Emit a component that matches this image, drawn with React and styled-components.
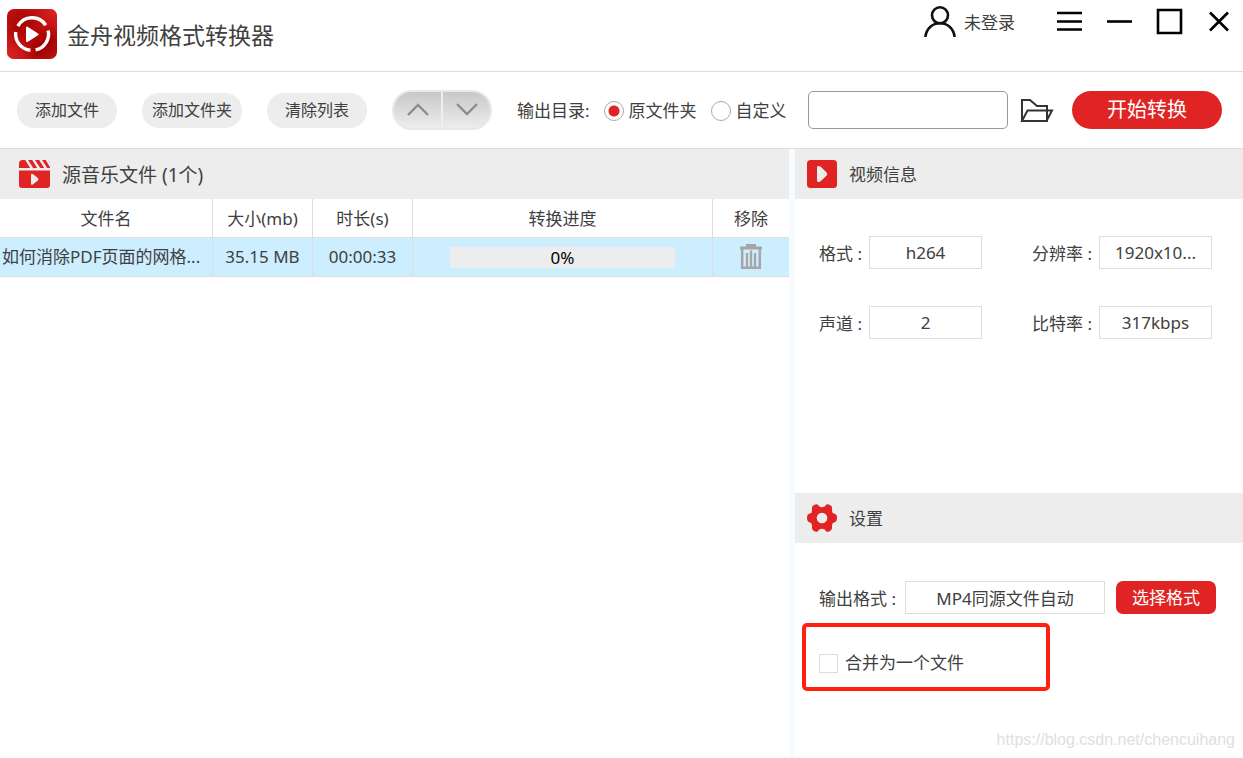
import React, { useState } from 'react';
import styled, { createGlobalStyle } from 'styled-components';

const files = [
    { id: 1, name: '如何消除PDF页面的网格...', size: '35.15 MB', duration: '00:00:33', progress: 0 },
];

const videoInfo = [
    { id: 'format', label: '格式 :', value: 'h264' },
    { id: 'resolution', label: '分辨率 :', value: '1920x10...' },
    { id: 'channels', label: '声道 :', value: '2' },
    { id: 'bitrate', label: '比特率 :', value: '317kbps' },
];

const LogoIcon = () => (
    <svg width="50" height="50" viewBox="0 0 50 50" aria-hidden="true">
        <defs>
            <linearGradient id="logoFill" x1="0" y1="0" x2="1" y2="1">
                <stop offset="0" stopColor="#c01414" />
                <stop offset="0.3" stopColor="#a80404" />
                <stop offset="0.5" stopColor="#b80c0c" />
                <stop offset="0.75" stopColor="#9c0000" />
                <stop offset="1" stopColor="#c41414" />
            </linearGradient>
            <linearGradient id="logoLight" x1="0" y1="1" x2="1" y2="0">
                <stop offset="0" stopColor="#e02626" />
                <stop offset="0.4" stopColor="#e02626" stopOpacity="0" />
                <stop offset="0.6" stopColor="#e02626" stopOpacity="0" />
                <stop offset="1" stopColor="#e02626" />
            </linearGradient>
        </defs>
        <rect width="50" height="50" rx="7" fill="url(#logoFill)" />
        <rect width="50" height="50" rx="7" fill="url(#logoLight)" />
        <g fill="none" stroke="#fff" strokeWidth="3.4">
            <path d="M10.8 17.200A16.300 16.300 0 0 1 38.700 16.200" />
            <path d="M8.700 23A16.300 16.300 0 0 0 23.400 41.200" />
            <path d="M41.200 21.500A16.300 16.300 0 0 1 28.600 40.900" />
        </g>
        <path d="M20 18.500v13.600l10.500-6.800z" fill="#fff" stroke="#fff" strokeWidth="2" strokeLinejoin="round" />
    </svg>
);

const UserIcon = () => (
    <svg width="32" height="32" viewBox="0 0 32 32" fill="none" stroke="#111" strokeWidth="2.6" aria-hidden="true">
        <circle cx="16" cy="9.3" r="8" />
        <path d="M1.4 31C2.2 22.5 8.5 17.3 16 17.3S29.8 22.5 30.6 31" />
    </svg>
);

const FolderIcon = () => (
    <svg width="34" height="25" viewBox="0 0 34 25" fill="none" stroke="#333" strokeWidth="2" aria-hidden="true">
        <path d="M2 23V2h8l7 6h10v15z" />
        <path d="M2 23l5.5-10.5H32L26.5 23z" />
    </svg>
);

const ClapperIcon = () => (
    <svg width="31" height="28" viewBox="0 0 31 28" aria-hidden="true">
        <path d="M3.5 0H27.5Q31 0 31 3.5V8H0V3.5Q0 0 3.5 0z" fill="#e02424" />
        <path d="M7 -1l6 9.5M14 -1l6 9.500M21 -1l6 9.500M27.500 -1l5 8.500" stroke="#ededed" strokeWidth="2.4" />
        <path d="M0 10.500H31V25q0 3-3 3H3q-3 0-3-3z" fill="#e02424" />
        <path d="M12 15v8.500q0 2 1.800 1l5-4q1.400-1.200 0-2.500l-5-4Q12 13 12 15z" fill="#ededed" />
    </svg>
);

const PlayIcon = () => (
    <svg width="30" height="28" viewBox="0 0 30 28" aria-hidden="true">
        <rect width="30" height="28" rx="3.5" fill="#e02424" />
        <path d="M10 7.5v13q0 2 2 1.4 1.8-.5 3-1.9l4.600-4.600q1.400-1.400 0-2.800L15 8q-1.200-1.400-3-1.900-2-.6-2 1.400z" fill="#ededed" />
    </svg>
);

const GearIcon = () => (
    <svg width="30" height="28" viewBox="0 0 30 28" aria-hidden="true">
        <path
            d="M7.500 .8Q9.500 -.3 11 .8L12.300 2.400Q15 4 17.700 2.400L19 .8Q20.500 -.3 22.500 .8L24 1.800Q25.400 3 25 5V6.500Q25 9 27 9.600L28.800 10.200Q30 11 30 14T28.800 17.800L27 18.400Q25 19 25 21.500V23Q25.400 25 24 26.200L22.500 27.200Q20.500 28.300 19 27.200L17.700 25.600Q15 24 12.300 25.600L11 27.200Q9.500 28.300 7.500 27.200L6 26.200Q4.600 25 5 23V21.500Q5 19 3 18.400L1.200 17.800Q0 17 0 14T1.200 10.200L3 9.600Q5 9 5 6.500V5Q4.600 3 6 1.800z"
            fill="#e02424"
        />
        <circle cx="15" cy="14" r="5.300" fill="#ededed" />
    </svg>
);

const TrashIcon = () => (
    <svg width="24" height="26" viewBox="0 0 24 26" fill="none" stroke="#a6a6a6" aria-hidden="true">
        <path d="M1 4h22M7 1.500h10" strokeWidth="3" />
        <path d="M3.200 4v19.800h17.600V4" strokeWidth="2.500" />
        <path d="M8 9v15M12 6.500v17.500M16 9v15" strokeWidth="2.300" />
    </svg>
);

const App = () => {
    const [target, setTarget] = useState('source');
    const [path, setPath] = useState('');
    const [merge, setMerge] = useState(false);

    return (
        <Window>
            <GlobalStyle />

            {/* TITLE BAR */}
            <TitleBar>
                <Brand>
                    <LogoIcon />
                    <h1>金舟视频格式转换器</h1>
                </Brand>
                <WindowActions>
                    <UserButton type="button">
                        <UserIcon />
                        <span>未登录</span>
                    </UserButton>
                    <WindowButton type="button" aria-label="菜单">
                        <svg width="28" height="28" viewBox="0 0 28 28"><path d="M2 5h25M2 13.500h25M2 21.500h25" /></svg>
                    </WindowButton>
                    <WindowButton type="button" aria-label="最小化">
                        <svg width="28" height="28" viewBox="0 0 28 28"><path d="M2 13.500h25" /></svg>
                    </WindowButton>
                    <WindowButton type="button" aria-label="最大化">
                        <svg width="28" height="28" viewBox="0 0 28 28"><path d="M3 2h23v23H3z" /></svg>
                    </WindowButton>
                    <WindowButton type="button" aria-label="关闭">
                        <svg width="28" height="28" viewBox="0 0 28 28"><path d="M5 4.500l18 18M23 4.500l-18 18" /></svg>
                    </WindowButton>
                </WindowActions>
            </TitleBar>

            {/* TOOLBAR */}
            <Toolbar>
                <ButtonRow>
                    <ToolButton type="button">添加文件</ToolButton>
                    <ToolButton type="button">添加文件夹</ToolButton>
                    <ToolButton type="button">清除列表</ToolButton>
                    <MoveGroup>
                        <button type="button" aria-label="上移">
                            <svg width="22" height="14" viewBox="0 0 22 14"><path d="M1 12L11 2l10 10" /></svg>
                        </button>
                        <button type="button" aria-label="下移">
                            <svg width="22" height="14" viewBox="0 0 22 14"><path d="M1 1l10 10L21 1" /></svg>
                        </button>
                    </MoveGroup>
                </ButtonRow>
                <TargetGroup role="radiogroup" aria-labelledby="target-label">
                    <span id="target-label">输出目录:</span>
                    <RadioLabel>
                        <Radio name="target" checked={target === 'source'} onChange={() => setTarget('source')} />
                        原文件夹
                    </RadioLabel>
                    <RadioLabel>
                        <Radio name="target" checked={target === 'custom'} onChange={() => setTarget('custom')} />
                        自定义
                    </RadioLabel>
                </TargetGroup>
                <PathInput aria-label="输出目录" value={path} onChange={(e) => setPath(e.target.value)} />
                <IconButton type="button" aria-label="打开文件夹">
                    <FolderIcon />
                </IconButton>
                <StartButton type="button">开始转换</StartButton>
            </Toolbar>

            <Content>
                {/* FILE LIST */}
                <FilePane>
                    <PaneHeader $wide>
                        <ClapperIcon />
                        <h2>源音乐文件 (1个)</h2>
                    </PaneHeader>
                    <FileTable>
                        <colgroup>
                            <col />
                            <col className="short" />
                            <col className="short" />
                            <col className="progress" />
                            <col className="remove" />
                        </colgroup>
                        <thead>
                            <tr>
                                <th>文件名</th>
                                <th>大小(mb)</th>
                                <th>时长(s)</th>
                                <th>转换进度</th>
                                <th>移除</th>
                            </tr>
                        </thead>
                        <tbody>
                            {files.map((file) => (
                                <tr key={file.id}>
                                    <td className="name">{file.name}</td>
                                    <td>{file.size}</td>
                                    <td>{file.duration}</td>
                                    <td>
                                        <Progress>{file.progress}%</Progress>
                                    </td>
                                    <td>
                                        <IconButton type="button" aria-label="移除">
                                            <TrashIcon />
                                        </IconButton>
                                    </td>
                                </tr>
                            ))}
                        </tbody>
                    </FileTable>
                </FilePane>

                <SidePane>
                    {/* VIDEO INFO */}
                    <InfoSection>
                        <PaneHeader>
                            <PlayIcon />
                            <h2>视频信息</h2>
                        </PaneHeader>
                        <InfoGrid>
                            {videoInfo.map((item) => (
                                <React.Fragment key={item.id}>
                                    <label htmlFor={item.id}>{item.label}</label>
                                    <ValueBox id={item.id} value={item.value} readOnly />
                                </React.Fragment>
                            ))}
                        </InfoGrid>
                    </InfoSection>

                    {/* SETTINGS */}
                    <section>
                        <PaneHeader>
                            <GearIcon />
                            <h2>设置</h2>
                        </PaneHeader>
                        <FormatRow>
                            <label htmlFor="output">输出格式 :</label>
                            <ValueBox id="output" value="MP4同源文件自动" readOnly $wide />
                            <FormatButton type="button">选择格式</FormatButton>
                        </FormatRow>
                        <MergeBox>
                            <label>
                                <Checkbox checked={merge} onChange={(e) => setMerge(e.target.checked)} />
                                合并为一个文件
                            </label>
                        </MergeBox>
                    </section>
                </SidePane>
            </Content>

            <Watermark>https://blog.csdn.net/chencuihang</Watermark>
        </Window>
    );
};

const GlobalStyle = createGlobalStyle`
    * {
        box-sizing: border-box;
    }

    body {
        margin: 0;
        background: #fff;
    }

    body, button, input {
        font-family: "Noto Sans", "Noto Sans CJK SC", sans-serif;
        font-size: 17px;
        line-height: 24px;
        color: #404040;
    }

    h1, h2 {
        margin: 0;
        font-weight: 400;
    }

    button {
        padding: 0;
        border: 0;
        background: none;
        cursor: pointer;
    }

    svg {
        display: block;
        flex-shrink: 0;
    }
`;

const Window = styled.div`
    position: relative;
    display: flex;
    flex-direction: column;
    min-height: 100vh;
`;

/* ── TITLE BAR ── */
const TitleBar = styled.header`
    display: flex;
    justify-content: space-between;
    min-height: 72px;
    border-bottom: 1px solid #ddd;
`;

const Brand = styled.div`
    display: flex;
    align-items: center;
    gap: 10px;
    padding: 0 7px 3px;

    h1 {
        padding-top: 2px;
        font-size: 23px;
        line-height: 32px;
    }
`;

const WindowActions = styled.div`
    display: flex;
    align-items: center;
    height: 44px;
`;

const UserButton = styled.button`
    display: flex;
    align-items: center;
    gap: 8px;
    margin-right: 28px;

    span {
        padding-top: 2px;
    }
`;

const WindowButton = styled.button`
    display: flex;
    justify-content: center;
    width: 50px;
    padding-left: 2px;

    svg {
        fill: none;
        stroke: #000;
        stroke-width: 2.6;
    }
`;

/* ── TOOLBAR ── */
const Toolbar = styled.div`
    display: flex;
    align-items: center;
    min-height: 77px;
    padding: 0 21px 0 17px;
    border-bottom: 1px solid #ddd;
`;

const ButtonRow = styled.div`
    display: flex;
    align-items: center;
    gap: 25px;
    margin-right: 25px;
`;

const ToolButton = styled.button`
    width: 100px;
    height: 35px;
    border-radius: 17px;
    background: #ededed;
    font-size: 16px;
`;

const MoveGroup = styled.div`
    display: flex;
    gap: 2px;
    width: 100px;
    height: 40px;
    border: 2px solid #e8e8e8;
    border-radius: 20px;
    background: #eee;
    overflow: hidden;

    button {
        display: flex;
        flex: 1;
        align-items: center;
        justify-content: center;
        background: linear-gradient(#c8c8c8, #ededed);
    }

    svg {
        fill: none;
        stroke: #8c8c8c;
        stroke-width: 2.4;
    }
`;

const TargetGroup = styled.div`
    display: flex;
    flex: 1;
    align-items: center;
    gap: 14px;
    padding-top: 1px;
    white-space: nowrap;
`;

const RadioLabel = styled.label`
    display: flex;
    align-items: center;
    gap: 5px;
`;

const Radio = styled.input.attrs({ type: 'radio' })`
    appearance: none;
    width: 20px;
    height: 20px;
    margin: 0;
    border: 1px solid #aaa;
    border-radius: 50%;
    background: #fff;

    &:checked {
        background: radial-gradient(circle, #e02424 5px, #fff 6px);
    }
`;

const PathInput = styled.input`
    width: 200px;
    height: 38px;
    padding: 0 8px;
    border: 1px solid #999;
    border-radius: 5px;
`;

const IconButton = styled.button`
    display: inline-flex;
    align-items: center;
    justify-content: center;
    margin: 0 12px;
    vertical-align: middle;
`;

const StartButton = styled.button`
    width: 150px;
    height: 38px;
    margin-left: 6px;
    border-radius: 19px;
    background: #e02424;
    color: #fff;
    font-size: 20px;
`;

/* ── CONTENT ── */
const Content = styled.main`
    display: flex;
    flex: 1;
`;

const FilePane = styled.section`
    flex: 1;
    min-width: 0;
`;

const PaneHeader = styled.div`
    display: flex;
    align-items: center;
    gap: 12px;
    height: 50px;
    padding: 0 ${(props) => (props.$wide ? '19px' : '12px')};
    background: #ededed;

    h2 {
        padding-top: 2px;
        font-size: ${(props) => (props.$wide ? '19px' : '17px')};
        line-height: 24px;
    }
`;

const FileTable = styled.table`
    width: 100%;
    table-layout: fixed;
    border-collapse: separate;
    border-spacing: 0;
    text-align: center;

    .short {
        width: 100px;
    }

    .progress {
        width: 300px;
    }

    .remove {
        width: 76px;
    }

    th, td {
        height: 39px;
        padding: 2px 0 0;
        border-bottom: 1px solid #ddd;
        border-right: 1px solid #ddd;
        font-weight: 400;
        white-space: nowrap;
        overflow: hidden;
    }

    th:last-child, td:last-child {
        border-right: 0;
    }

    td {
        padding: 0;
        background: #cef;
    }

    .name {
        padding-left: 2px;
        text-align: left;
        text-overflow: ellipsis;
    }
`;

const Progress = styled.div`
    width: 75%;
    height: 21px;
    margin: 0 auto;
    background: #ededed;
    color: #000;
    line-height: 21px;
`;

const SidePane = styled.aside`
    width: 454px;
    border-left: 6px solid #f5fbff;
`;

const InfoSection = styled.section`
    min-height: 344px;
`;

const InfoGrid = styled.div`
    display: grid;
    grid-template-columns: 50px 163px 67px 113px;
    row-gap: 37px;
    align-items: center;
    justify-content: start;
    padding: 37px 24px;
    white-space: nowrap;

    label {
        padding-top: 2px;
    }
`;

const ValueBox = styled.input`
    width: ${(props) => (props.$wide ? '200px' : '113px')};
    height: 33px;
    padding: 0 8px;
    border: 1px solid #ddd;
    background: #fff;
    text-align: center;
`;

const FormatRow = styled.div`
    display: flex;
    align-items: center;
    padding: 38px 24px 0;
    white-space: nowrap;

    label {
        width: 86px;
        padding-top: 2px;
    }
`;

const FormatButton = styled.button`
    width: 100px;
    height: 33px;
    margin-left: 11px;
    border-radius: 7px;
    background: #e02424;
    color: #fff;
`;

const MergeBox = styled.div`
    width: 248px;
    margin: 9px 0 0 7px;
    padding: 22px 13px 10px;
    border: 4px solid #ff2010;
    border-radius: 5px;

    label {
        display: flex;
        align-items: center;
        gap: 7px;
        height: 28px;
    }
`;

const Checkbox = styled.input.attrs({ type: 'checkbox' })`
    appearance: none;
    width: 19px;
    height: 19px;
    margin: 0;
    border: 1px solid #ddd;
    background: #fff;

    &:checked {
        background: #e02424;
    }
`;

const Watermark = styled.span`
    position: absolute;
    right: 8px;
    bottom: 6px;
    color: #e0e0e0;
    font-family: "Liberation Sans", Arial, sans-serif;
    font-size: 16px;
    pointer-events: none;
`;

export default App;
